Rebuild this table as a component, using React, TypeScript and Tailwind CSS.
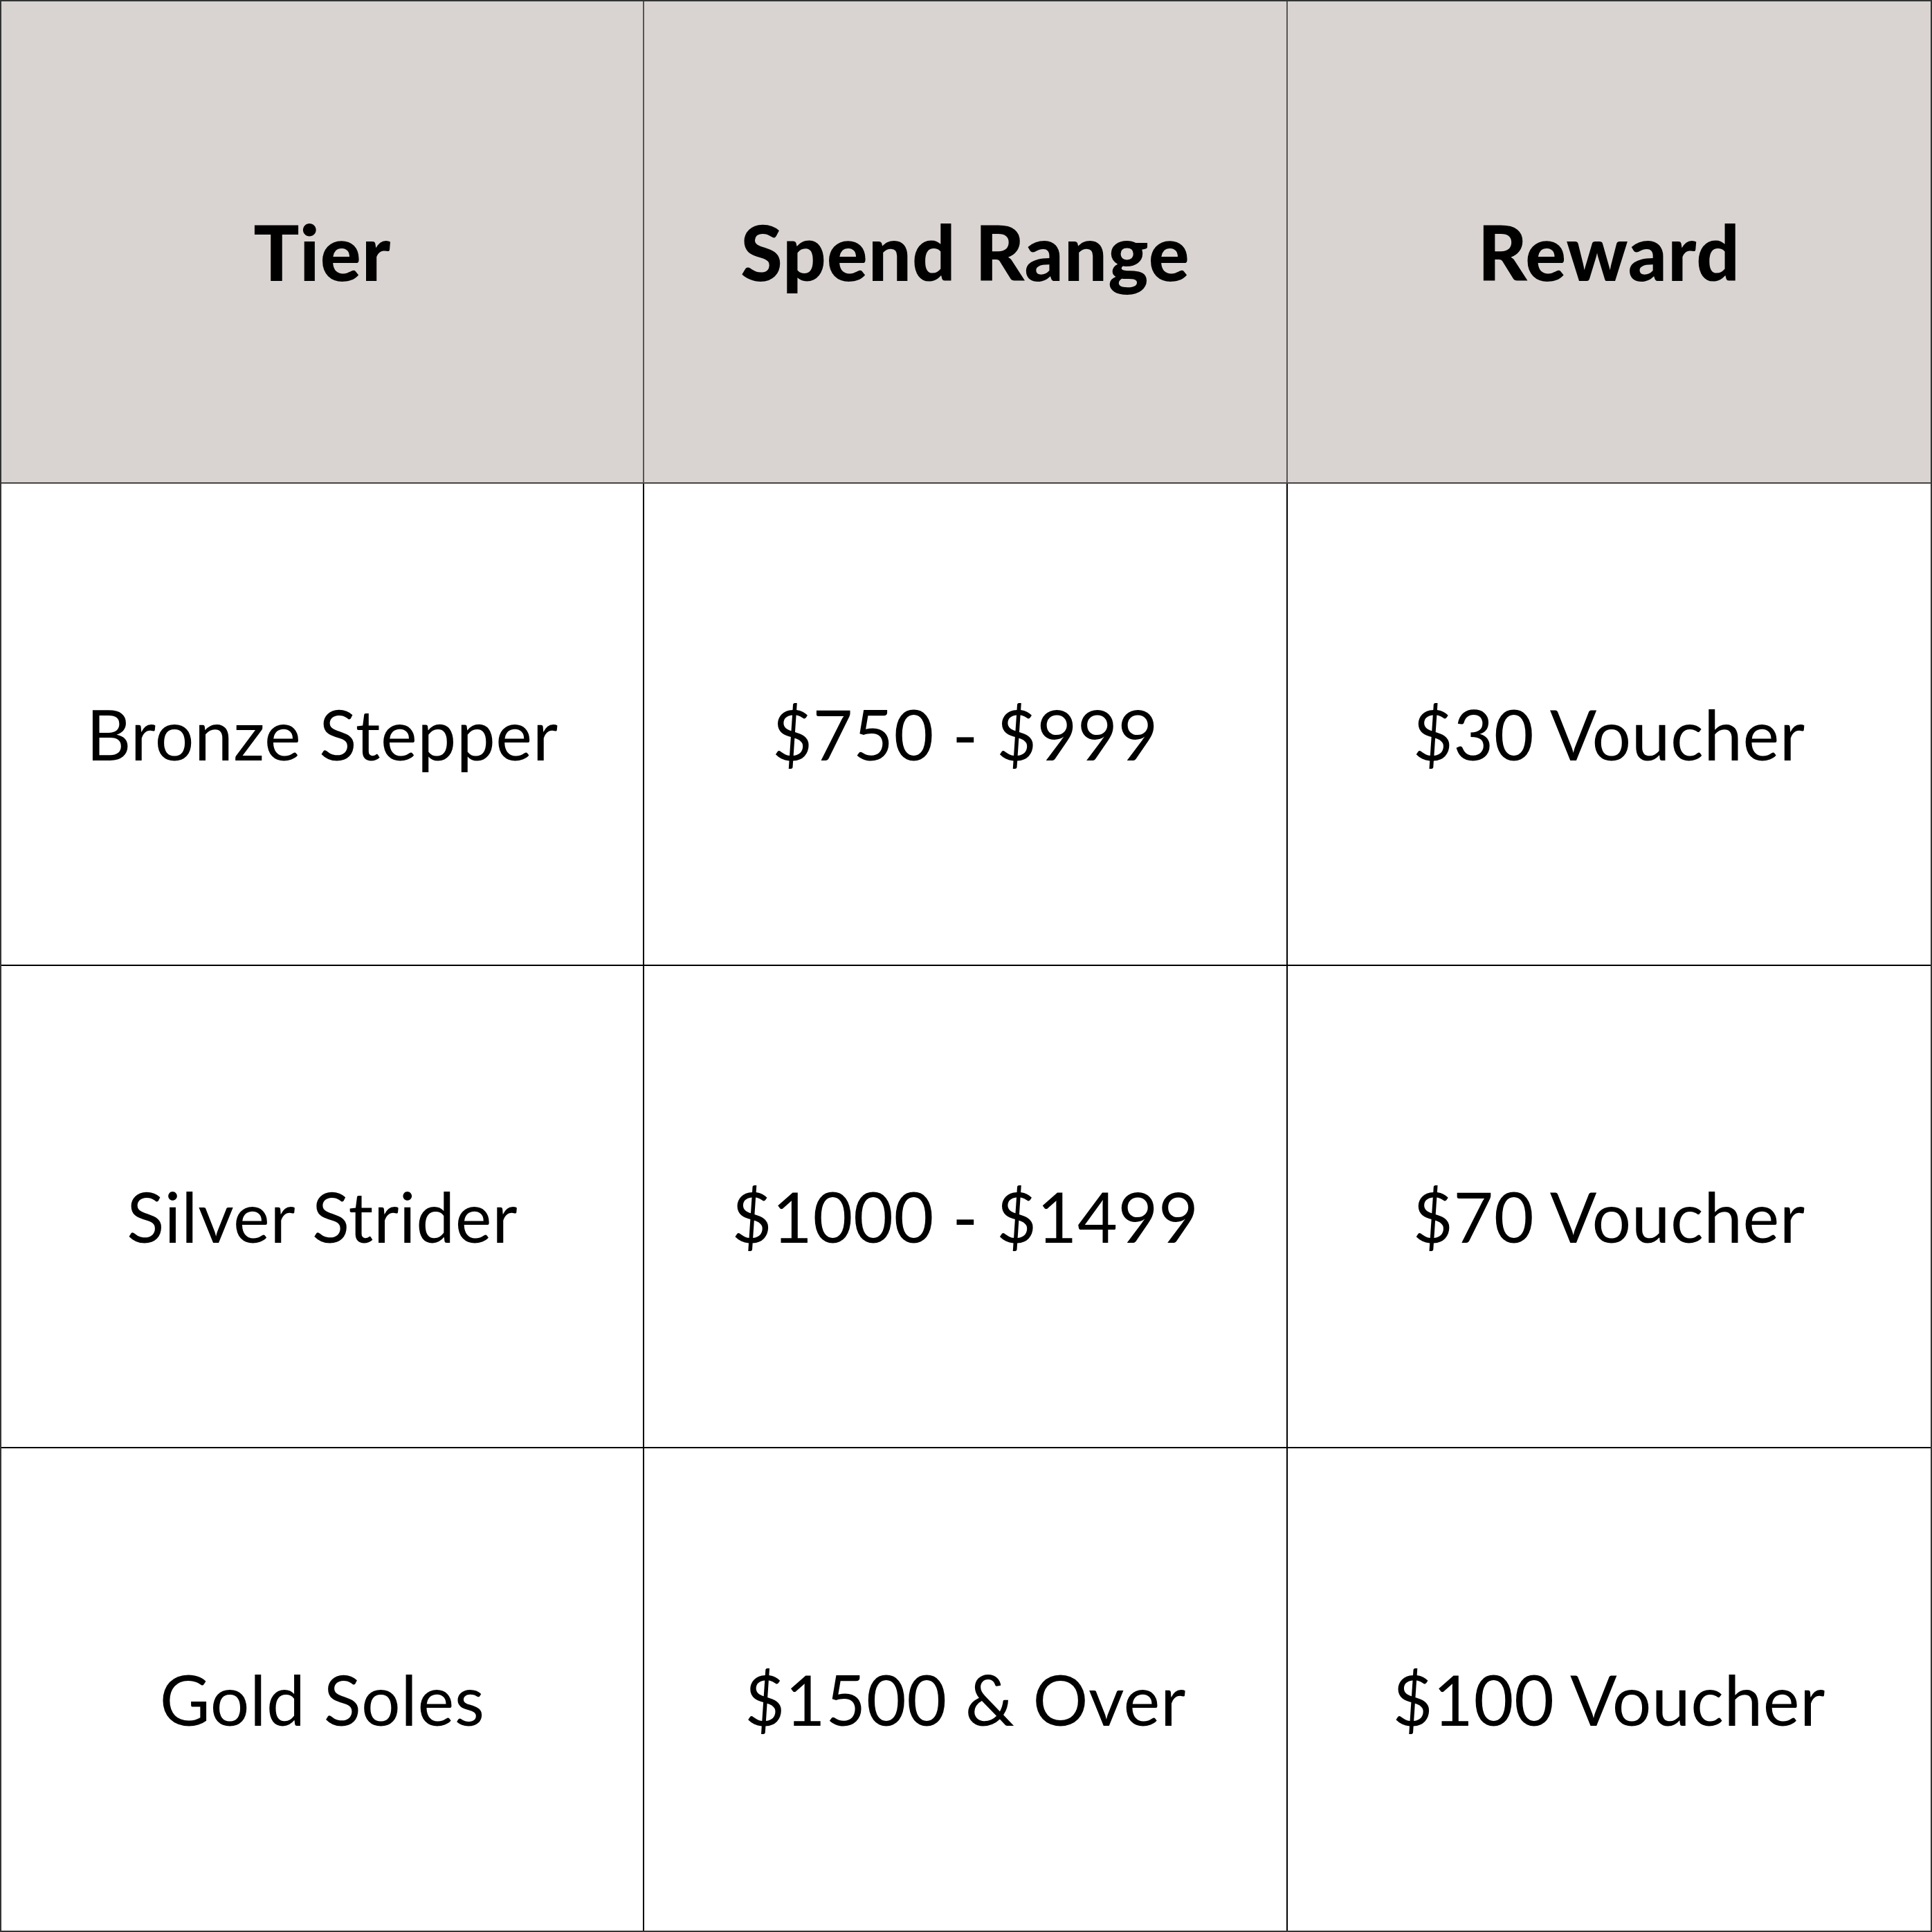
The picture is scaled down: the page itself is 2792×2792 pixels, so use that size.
const HEAD = ['Tier', 'Spend Range', 'Reward']

const ROWS = [
  ['Bronze Stepper', '$750 - $999', '$30 Voucher'],
  ['Silver Strider', '$1000 - $1499', '$70 Voucher'],
  ['Gold Soles', '$1500 & Over', '$100 Voucher'],
]

export default function App() {
  return (
    <div
      className="w-[2792px] h-[2792px] grid grid-cols-3 grid-rows-4 bg-white text-black border-2 border-[#333]"
      style={{ fontFamily: 'Lato, "Open Sans", sans-serif' }}
    >
      {HEAD.map((h, i) => (
        <div
          key={h}
          className={`flex items-center justify-center pt-[28px] bg-[#d9d4d1] border-b-2 border-b-[#444] ${i < 2 ? 'border-r-2 border-r-[#555]' : ''}`}
        >
          <span className="text-[110px] font-black tracking-[1px]">{h}</span>
        </div>
      ))}
      {ROWS.map((row, r) =>
        row.map((cell, i) => (
          <div
            key={r + '-' + i}
            className={`flex items-center justify-center pt-[26px] ${r < 2 ? 'border-b-2 border-b-black' : ''} ${i < 2 ? 'border-r-2 border-r-black' : ''}`}
          >
            <span className="text-[100px] font-normal tracking-[0.5px]">{cell}</span>
          </div>
        ))
      )}
    </div>
  )
}
